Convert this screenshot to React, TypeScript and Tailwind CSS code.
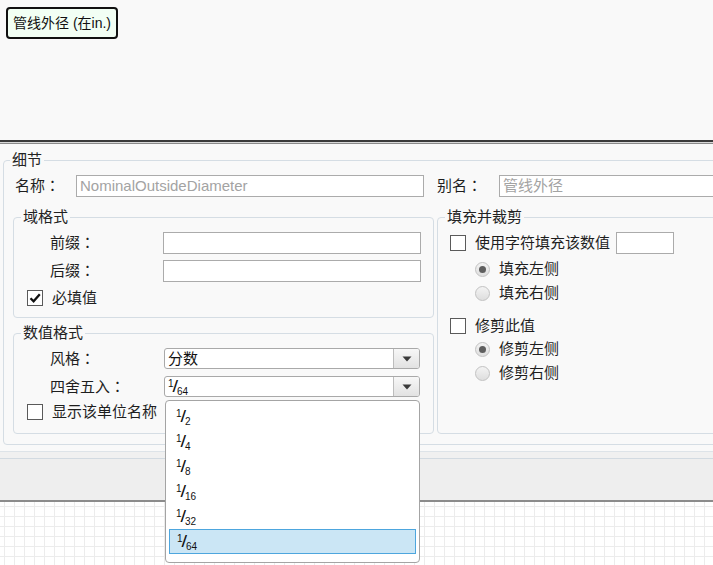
import React from "react";

function Frac({ d }: { d: string }) {
  return (
    <span className="inline-flex items-start h-[15px] font-['Liberation_Sans',sans-serif] text-[#111]">
      <span className="text-[10px] leading-[10px]">1</span>
      <span className="text-[16px] leading-[15px] -ml-[1px] scale-x-[1.25]">/</span>
      <span className="text-[10px] leading-[10px] self-end ml-[0px] translate-y-[3px]">{d}</span>
    </span>
  );
}

function Colon() {
  return <span className="font-['Noto_Sans_CJK_TC',sans-serif]">：</span>;
}

function Checkbox({ checked = false }: { checked?: boolean }) {
  return (
    <span className="w-[16px] h-[16px] border border-[#5a5a5a] bg-white flex items-center justify-center shrink-0">
      {checked && (
        <svg width="14" height="14" viewBox="0 0 14 14">
          <path d="M2.5 7.2 L5.6 10.3 L11.8 3.2" fill="none" stroke="#111" strokeWidth="2.3" />
        </svg>
      )}
    </span>
  );
}

function Radio({ checked = false }: { checked?: boolean }) {
  return (
    <span className="w-[15px] h-[15px] rounded-full border border-[#c2c2c2] bg-[linear-gradient(to_bottom,#f3f3f3,#dedede)] flex items-center justify-center shrink-0">
      {checked && <span className="w-[7px] h-[7px] rounded-full bg-[#5e5e5e]" />}
    </span>
  );
}

function Select({ children }: { children: React.ReactNode }) {
  return (
    <div className="w-[256px] h-[21px] border border-[#a9a9a9] rounded-[3px] bg-white flex items-stretch overflow-hidden">
      <div className="flex-1 flex items-center pl-[3px] text-[15px] leading-[19px] text-[#111]">{children}</div>
      <div className="w-[26px] border-l border-[#bdbdbd] bg-[linear-gradient(to_bottom,#f7f7f7,#e2e2e2)] flex items-center justify-center">
        <svg width="10" height="6" viewBox="0 0 10 6">
          <path d="M0.5 0.5 H9.5 L5 5.5 Z" fill="#3a3a3a" />
        </svg>
      </div>
    </div>
  );
}

function Legend({ children, outer = false }: { children: React.ReactNode; outer?: boolean }) {
  return (
    <legend className={`${outer ? "ml-[6px]" : "ml-[7px]"} px-[2px] text-[15px] leading-[20px] text-[#222]`}>
      {children}
    </legend>
  );
}

export default function App() {
  return (
    <div className="w-[713px] h-[565px] overflow-hidden relative bg-white font-['Liberation_Sans','Noto_Sans_CJK_SC',sans-serif] text-[15px] text-[#1e1e1e]">
      {/* top canvas */}
      <div className="h-[140px] bg-[#f9f9f9] pt-[7px] pl-[6px]">
        <div className="inline-flex items-center h-[32px] px-[5px] border-2 border-[#111] rounded-[4px] bg-[#f2fff4] text-[14px] text-[#111]">
          管线外径 (在in.)
        </div>
      </div>
      {/* separator */}
      <div className="h-[4px] border-t-2 border-b border-t-[#3a3a3a] border-b-[#8a8a8a] bg-[#d8d8d8]" />
      {/* panel */}
      <div className="h-[307px] bg-[#f9f9f9] pt-[6px] pl-[3px]">
        <fieldset className="w-[760px] border border-[#d5dde4] rounded-[4px] pb-[10px]">
          <Legend outer>细节</Legend>
          <div className="mt-[5px] h-[22px] flex items-center pl-[11px]">
            <span className="w-[61px]">名称<Colon /></span>
            <div className="w-[348px] h-[22px] border border-[#ababab] bg-white flex items-center pl-[3px] text-[#a3a3a3]">
              NominalOutsideDiameter
            </div>
            <span className="ml-[13px] w-[62px]">别名<Colon /></span>
            <div className="w-[300px] h-[22px] border border-[#ababab] bg-white flex items-center pl-[3px] text-[#a3a3a3]">
              管线外径
            </div>
          </div>
          <div className="mt-[10px] pl-[9px] flex items-stretch">
            <div className="w-[421px] flex flex-col">
              <fieldset className="border border-[#d5dde4] rounded-[4px] pb-[9px]">
                <Legend>域格式</Legend>
                <div className="mt-[5px] h-[22px] flex items-center pl-[36px]">
                  <span className="w-[113px]">前缀<Colon /></span>
                  <div className="w-[258px] h-[22px] border border-[#ababab] bg-white" />
                </div>
                <div className="mt-[6px] h-[22px] flex items-center pl-[36px]">
                  <span className="w-[113px]">后缀<Colon /></span>
                  <div className="w-[258px] h-[22px] border border-[#ababab] bg-white" />
                </div>
                <div className="mt-[6px] h-[20px] flex items-center pl-[13px] gap-[9px]">
                  <Checkbox checked />
                  <span>必填值</span>
                </div>
              </fieldset>
              <fieldset className="mt-[5px] border border-[#d5dde4] rounded-[4px] pb-[11px]">
                <Legend>数值格式</Legend>
                <div className="mt-[5px] h-[21px] flex items-center pl-[36px]">
                  <span className="w-[114px]">风格<Colon /></span>
                  <Select>分数</Select>
                </div>
                <div className="mt-[7px] h-[21px] flex items-center pl-[36px]">
                  <span className="w-[114px]">四舍五入<Colon /></span>
                  <Select>
                    <Frac d="64" />
                  </Select>
                </div>
                <div className="mt-[5px] h-[20px] flex items-center pl-[13px] gap-[9px]">
                  <Checkbox />
                  <span>显示该单位名称</span>
                </div>
              </fieldset>
            </div>
            <fieldset className="ml-[3px] w-[320px] border border-[#d5dde4] rounded-[4px]">
              <Legend>填充并裁剪</Legend>
              <div className="mt-[5px] h-[22px] flex items-center pl-[12px]">
                <Checkbox />
                <span className="ml-[9px]">使用字符填充该数值</span>
                <div className="ml-[6px] w-[58px] h-[22px] border border-[#ababab] bg-white" />
              </div>
              <div className="mt-[3px] h-[24px] flex items-center pl-[37px] gap-[9px]">
                <Radio checked />
                <span>填充左侧</span>
              </div>
              <div className="h-[24px] flex items-center pl-[37px] gap-[9px]">
                <Radio />
                <span>填充右侧</span>
              </div>
              <div className="mt-[10px] h-[22px] flex items-center pl-[12px] gap-[9px]">
                <Checkbox />
                <span>修剪此值</span>
              </div>
              <div className="h-[24px] flex items-center pl-[37px] gap-[9px]">
                <Radio checked />
                <span>修剪左侧</span>
              </div>
              <div className="h-[24px] flex items-center pl-[37px] gap-[9px]">
                <Radio />
                <span>修剪右侧</span>
              </div>
            </fieldset>
          </div>
        </fieldset>
      </div>
      {/* bottom bar */}
      <div className="h-[7px] border-t border-[#dde3e8] bg-[#f0f0f0]" />
      <div className="h-[42px] border-t border-[#d2dae1] bg-[#eeeeee]" />
      <div className="h-[2px] bg-[#8c8c8c]" />
      {/* grid canvas */}
      <div className="h-[70px] bg-white bg-[linear-gradient(to_right,#ececec_1px,transparent_1px),linear-gradient(to_bottom,#ececec_1px,transparent_1px)] bg-[size:10px_10px] bg-[position:4px_4px]" />

      {/* dropdown list */}
      <div className="absolute left-[165px] top-[400px] w-[255px] h-[163px] border border-[#a4a4a4] rounded-[4px] bg-white pt-[3px] px-[3px]">
        {["2", "4", "8", "16", "32", "64"].map((d, i) => (
          <div
            key={d}
            className={`h-[25px] flex items-center pl-[7px] ${
              i === 5 ? "bg-[#cbe6f5] border border-[#4da6de] pl-[6px]" : ""
            }`}
          >
            <Frac d={d} />
          </div>
        ))}
      </div>
    </div>
  );
}
